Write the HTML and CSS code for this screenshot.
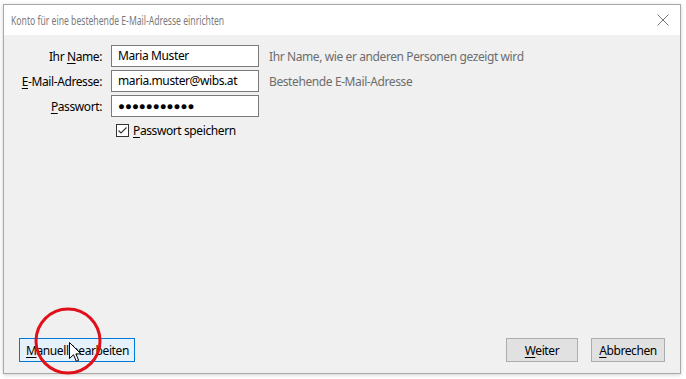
FILE: index.html
```
<!doctype html>
<html lang="de">
<head>
	<meta charset="UTF-8">
	<title>Konto einrichten</title>
	<link rel="stylesheet" href="styles.css">
</head>
<body>
	<div class="dlg">
		<div class="titlebar">
			<span class="title-wrap"><span class="title">Konto für eine bestehende E-Mail-Adresse einrichten</span></span>
			<svg class="close" width="12" height="12" viewBox="0 0 12 12"><path d="M0.5 0.5L11.5 11.5M11.5 0.5L0.5 11.5" stroke="#777" stroke-width="1" fill="none"/></svg>
		</div>
		<div class="content">
			<div class="form">
				<label class="lbl">Ihr <u>N</u>ame:</label>
				<div class="field">Maria Muster</div>
				<span class="hint">Ihr Name, wie er anderen Personen gezeigt wird</span>

				<label class="lbl"><u>E</u>-Mail-Adresse:</label>
				<div class="field">maria.muster@wibs.at</div>
				<span class="hint">Bestehende E-Mail-Adresse</span>

				<label class="lbl"><u>P</u>asswort:</label>
				<div class="field pw">●●●●●●●●●●●</div>
				<span></span>

				<span></span>
				<div class="check">
					<svg class="box" width="13" height="13" viewBox="0 0 13 13"><rect x="0.5" y="0.5" width="12" height="12" fill="#fff" stroke="#333"/><path d="M2.5 6.5L5 9L10.5 3.5" stroke="#333" stroke-width="1.1" fill="none"/></svg>
					<span><u>P</u>asswort speichern</span>
				</div>
				<span></span>
			</div>
		</div>
		<div class="footer">
			<button class="btn focus"><u>M</u>anuell bearbeiten</button>
			<span class="grow"></span>
			<button class="btn wide"><u>W</u>eiter</button>
			<button class="btn cancel"><u>A</u>bbrechen</button>
		</div>
		<svg class="ring" width="72" height="72" viewBox="0 0 72 72"><circle cx="36" cy="36" r="32" stroke="#e0101a" stroke-width="3" fill="none"/></svg>
		<svg class="cursor" width="13" height="21" viewBox="0 0 13 21"><path d="M0.5 0.5L0.5 16.5L4.5 12.7L7.3 19.3L9.6 18.3L6.9 11.9L12 11.9Z" fill="#fff" stroke="#000" stroke-width="1" stroke-linejoin="round"/></svg>
	</div>
</body>
</html>
```
FILE: styles.css
```
*{margin:0;padding:0;box-sizing:border-box;}
body{
	background:#fff;
	font-family:"Noto Sans","Liberation Sans",sans-serif;
	font-size:12px;
	letter-spacing:-0.4px;
	color:#000;
	padding:4px 5px 5px 3px;
	height:379px;
}
u{text-decoration:underline;text-underline-offset:2px;}
.dlg{
	position:relative;
	height:370px;
	border:1px solid #a8a8a8;
	background:#f0f0f0;
	display:flex;
	flex-direction:column;
	box-shadow:0 1px 4px rgba(0,0,0,0.18);
}
.titlebar{
	height:30px;
	background:#fff;
	display:flex;
	align-items:center;
	padding:0 11px 0 7px;
}
.title-wrap{flex:1;}
.title{
	display:inline-block;
	color:#7a7a7a;
	font-size:12.5px;
	letter-spacing:0;
	white-space:nowrap;
	transform:scaleX(0.69);
	transform-origin:left center;
}
.content{
	flex:1;
	padding-top:10px;
}
.form{
	display:grid;
	grid-template-columns:98px 148px auto;
	column-gap:9px;
	row-gap:3px;
	align-items:center;
}
.lbl{text-align:right;}
.field{
	height:22px;
	border:1px solid #7a7a7a;
	background:#fff;
	padding:0 6px;
	line-height:20px;
	white-space:nowrap;
	overflow:hidden;
}
.pw{font-size:11.5px;letter-spacing:0;}
.hint{color:#6d6d6d;padding-left:1px;}
.check{
	display:flex;
	align-items:center;
	gap:4px;
	padding:2px 0 0 5px;
}
.footer{
	display:flex;
	align-items:center;
	gap:13px;
	padding:0 15px 11px 15px;
}
.grow{flex:1;}
.btn{
	height:24px;
	padding:0 6px;
	border:1px solid #adadad;
	background:#e1e1e1;
	font:inherit;
	letter-spacing:inherit;
	color:#000;
	white-space:nowrap;
}
.btn.wide{width:72px;}
.btn.cancel{width:74px;}
.btn.focus{
	border-color:#0078d7;
	background:#e5f1fb;
	width:116px;
}
.ring{position:absolute;left:28px;top:300px;}
.cursor{position:absolute;left:65px;top:337px;}
```
